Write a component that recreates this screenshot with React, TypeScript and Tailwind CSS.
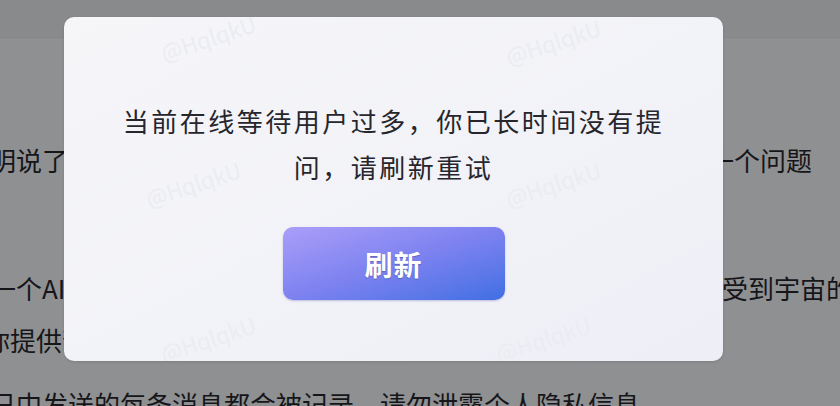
import React from "react";

const font = { fontFamily: '"Noto Sans CJK SC", "Noto Sans", sans-serif' };

function PageRow({ left, right, className }: { left: string; right: string; className?: string }) {
  return (
    <div className={`flex justify-between whitespace-nowrap ${className ?? ""}`}>
      <span>{left}</span>
      <span>{right}</span>
    </div>
  );
}

// faint watermark stamps across the dialog
const marks = [
  { x: 95, y: 4 },
  { x: 440, y: 8 },
  { x: 80, y: 150 },
  { x: 440, y: 150 },
  { x: 95, y: 305 },
  { x: 430, y: 305 },
];

export default function App() {
  return (
    <div className="relative w-[840px] h-[406px] overflow-hidden bg-[#8f9091]" style={font}>
      {/* page behind the dimmed overlay */}
      <div className="h-[38px] bg-[#898a8b] border-b border-[#858687]" />
      <div className="text-[26px] leading-[52px] text-[#16161a] ml-[-10px] mr-[28px]">
        <PageRow className="mt-[96px]" left="明说了你的问题，我会尽力去回答" right="一个问题" />
        <PageRow className="mt-[76px] mr-[-40px]" left="一个AI，我无法真正感受到宇宙的" right="受到宇宙的" />
        <PageRow className="ml-[-6px]" left="你提供帮助和信息" right="" />
        <PageRow className="mt-[12px]" left="日中发送的每条消息都会被记录，请勿泄露个人隐私信息" right="" />
      </div>

      {/* dialog */}
      <div className="absolute left-[64px] top-[17px] w-[659px] h-[344px] overflow-hidden rounded-[10px] bg-gradient-to-br from-[#f6f6f9] to-[#eeeff6] shadow-[0_1px_3px_rgba(0,0,0,0.12)] flex flex-col items-center">
        {marks.map((m, i) => (
          <span
            key={i}
            className="absolute text-[22px] text-[#ebecf1] -rotate-[18deg] select-none"
            style={{ left: m.x, top: m.y }}
          >
            @HqlqkU
          </span>
        ))}
        <p className="relative mt-[81px] w-[548px] text-center text-[26px] leading-[46px] tracking-[2.5px] text-[#26262c]">
          当前在线等待用户过多，你已长时间没有提问，请刷新重试
        </p>
        <button className="relative mt-[37px] w-[222px] h-[73px] rounded-[10px] bg-gradient-to-br from-[#ab9ef8] via-[#7d82f0] to-[#3f6fe3] text-white text-[28px] font-bold tracking-[1px] shadow-[0_1px_2px_rgba(60,70,160,0.3)] [text-shadow:0_1px_1px_rgba(40,40,90,0.35)]">
          刷新
        </button>
      </div>
    </div>
  );
}
